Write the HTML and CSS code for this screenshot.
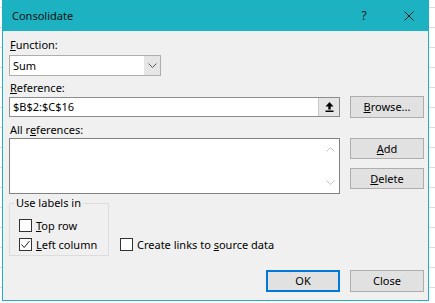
FILE: index.html
```html
<!DOCTYPE html>
<html>
<head>
<meta charset="utf-8">
<link rel="stylesheet" href="styles.css">
</head>
<body>
<div class="dialog">
  <div class="titlebar">
    <span class="title">Consolidate</span>
    <span class="help">?</span>
    <svg class="close-x" width="10" height="10" viewBox="0 0 10 10"><path d="M0.5 0.5L9.5 9.5M9.5 0.5L0.5 9.5" stroke="#1a1a1a" stroke-width="1" fill="none"/></svg>
  </div>
  <div class="content">
    <div class="lbl"><u>F</u>unction:</div>
    <div class="select">
      <span class="select-text">Sum</span>
      <span class="select-btn"><svg width="9" height="5" viewBox="0 0 9 5"><path d="M0.5 0.5L4.5 4.5L8.5 0.5" stroke="#5a5a5a" stroke-width="1" fill="none"/></svg></span>
    </div>
    <div class="lbl lbl-ref"><u>R</u>eference:</div>
    <div class="row row-ref">
      <div class="input">
        <span class="input-text">$B$2:$C$16</span>
        <span class="collapse-btn"><svg width="9" height="10" viewBox="0 0 9 10"><path d="M4.5 0L8.5 4.5H5.7V7.5H3.3V4.5H0.5Z" fill="#000"/><rect x="0.5" y="8.5" width="8" height="1.5" fill="#000"/></svg></span>
      </div>
      <button class="btn btn-browse"><u>B</u>rowse...</button>
    </div>
    <div class="lbl lbl-all">All r<u>e</u>ferences:</div>
    <div class="row row-all">
      <div class="list">
        <div class="scroll">
          <svg width="9" height="5" viewBox="0 0 9 5"><path d="M0.5 4.5L4.5 0.5L8.5 4.5" stroke="#c2c2c2" stroke-width="1" fill="none"/></svg>
          <svg width="9" height="5" viewBox="0 0 9 5"><path d="M0.5 0.5L4.5 4.5L8.5 0.5" stroke="#c2c2c2" stroke-width="1" fill="none"/></svg>
        </div>
      </div>
      <div class="btn-col">
        <button class="btn btn-small"><u>A</u>dd</button>
        <button class="btn btn-small"><u>D</u>elete</button>
      </div>
    </div>
    <div class="row row-labels">
      <fieldset class="group">
        <legend>Use labels in</legend>
        <div class="check-row"><span class="cb"></span><span><u>T</u>op row</span></div>
        <div class="check-row"><span class="cb"><svg width="11" height="11" viewBox="0 0 11 11"><path d="M1.5 5.5L4.2 8.5L9.5 2" stroke="#222" stroke-width="1" fill="none"/></svg></span><span><u>L</u>eft column</span></div>
      </fieldset>
      <div class="check-row check-links"><span class="cb"></span><span>Create links to <u>s</u>ource data</span></div>
    </div>
    <div class="footer">
      <button class="btn btn-ok">OK</button>
      <button class="btn">Close</button>
    </div>
  </div>
</div>
</body>
</html>
```
FILE: styles.css
```css
html, body {
  margin: 0;
  padding: 0;
}
body {
  width: 435px;
  height: 303px;
  overflow: hidden;
  background: repeating-linear-gradient(180deg, #ffffff 0, #ffffff 7px, #dcdcdc 7px, #dcdcdc 8px, #ffffff 8px, #ffffff 20px);
  font-family: "Noto Sans", "Open Sans", sans-serif;
  font-size: 11px;
  color: #000;
}
u {
  text-decoration: underline;
  text-underline-offset: 1px;
}
.dialog {
  margin-left: 2px;
  width: 427px;
  height: 301px;
  box-sizing: border-box;
  border: 1px solid #1fb0bf;
  border-top: 0;
  background: #f0f0f0;
  display: flex;
  flex-direction: column;
}
.titlebar {
  height: 31px;
  background: #1cb2c1;
  display: flex;
  align-items: center;
  padding-left: 9px;
  padding-right: 14px;
  flex-shrink: 0;
}
.title {
  flex: 1;
  color: #111;
  font-size: 11px;
}
.help {
  width: 12px;
  text-align: center;
  font-size: 12px;
  color: #1a1a1a;
  margin-right: 34px;
  margin-top: -1px;
}
.close-x {
  display: block;
}
.content {
  padding: 6px 4px 0 6px;
  display: flex;
  flex-direction: column;
}
.lbl {
  height: 16px;
  line-height: 16px;
  padding-left: 1px;
}
.select {
  margin-top: 2px;
  width: 152px;
  height: 21px;
  box-sizing: border-box;
  border: 1px solid #adadad;
  background: #fff;
  display: flex;
}
.select-text {
  flex: 1;
  padding-left: 3px;
  line-height: 19px;
}
.select-btn {
  width: 16px;
  background: #e5e5e5;
  display: flex;
  align-items: center;
  justify-content: center;
}
.lbl-ref {
  margin-top: 4px;
}
.row {
  display: flex;
}
.row-ref {
  height: 22px;
  align-items: center;
  gap: 10px;
}
.input {
  width: 331px;
  height: 20px;
  box-sizing: border-box;
  border: 1px solid #8c8c8c;
  background: #fff;
  display: flex;
}
.input-text {
  flex: 1;
  padding-left: 3px;
  line-height: 18px;
}
.collapse-btn {
  width: 20px;
  background: #e6e6e6;
  border-left: 1px solid #c8c8c8;
  display: flex;
  align-items: center;
  justify-content: center;
}
.btn {
  width: 74px;
  height: 22px;
  box-sizing: border-box;
  border: 1px solid #adadad;
  background: #e1e1e1;
  font-family: inherit;
  font-size: 11px;
  color: #000;
  padding: 0;
  line-height: 18px;
}
.lbl-all {
  margin-top: 4px;
}
.row-all {
  gap: 10px;
}
.list {
  width: 331px;
  height: 56px;
  box-sizing: border-box;
  border: 1px solid #828282;
  background: #fff;
  display: flex;
  justify-content: flex-end;
}
.scroll {
  width: 17px;
  display: flex;
  flex-direction: column;
  justify-content: space-between;
  align-items: center;
  padding: 8px 0 8px;
}
.scroll svg {
  display: block;
}
.btn-col {
  display: flex;
  flex-direction: column;
  gap: 9px;
}
.btn-small {
  height: 21px;
}
.row-labels {
  margin-top: 2px;
  align-items: flex-end;
}
.group {
  margin: 0;
  width: 100px;
  box-sizing: border-box;
  border: 1px solid #dcdcdc;
  padding: 7px 0 3px 9px;
  display: flex;
  flex-direction: column;
  gap: 3px;
}
.group legend {
  padding: 0 2px;
  margin-left: -5px;
  line-height: 14px;
  height: 14px;
}
.check-row {
  height: 16px;
  display: flex;
  align-items: center;
  gap: 4px;
  white-space: nowrap;
}
.cb {
  width: 13px;
  height: 13px;
  box-sizing: border-box;
  border: 1px solid #333;
  background: #fff;
  display: flex;
  align-items: center;
  justify-content: center;
}
.cb svg {
  display: block;
}
.check-links {
  margin-left: 11px;
  margin-bottom: 4px;
}
.footer {
  margin-top: 14px;
  display: flex;
  justify-content: flex-end;
  gap: 10px;
}
.btn-ok {
  border: 2px solid #0078d7;
  line-height: 16px;
}
```
